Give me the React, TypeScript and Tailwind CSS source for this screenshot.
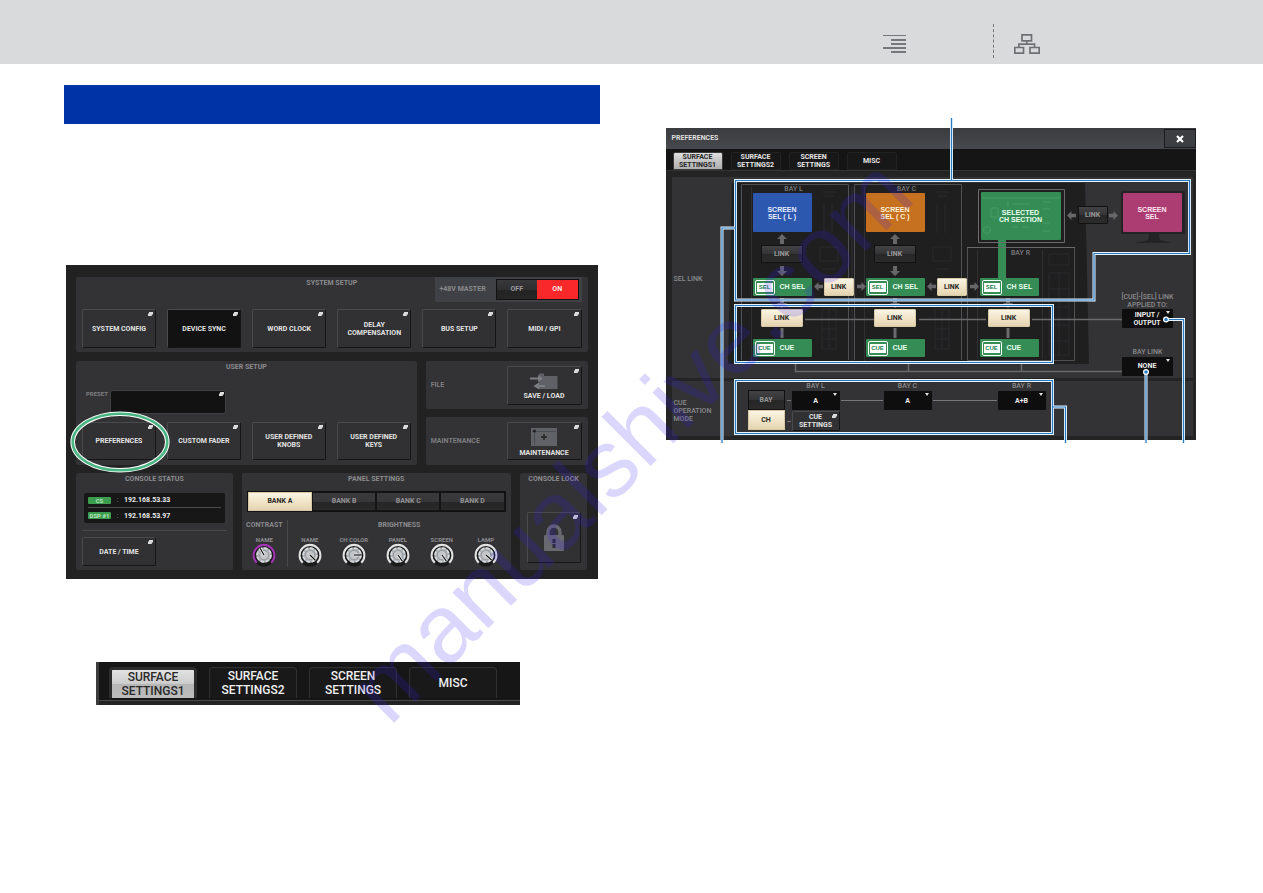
import React from "react";

function Popup({ className = "" }: { className?: string }) {
  return (
    <svg viewBox="0 0 5 4" aria-hidden="true" className={`pointer-events-none absolute right-[2px] top-[2px] h-1 w-[5px] ${className}`}>
      <path d="M1 0H5V2.6H3.8V4H0V1.6H1Z" fill="#dcdcdc" />
    </svg>
  );
}

function Caret() {
  return (
    <svg viewBox="0 0 4 3" aria-hidden="true" className="pointer-events-none absolute right-[3px] top-[2px] h-[3px] w-1">
      <path d="M0 0H4L2 3Z" fill="#e0e0e0" />
    </svg>
  );
}

function Key({ children, label, dark = false, className = "h-[39px]" }: { children: React.ReactNode; label?: string; dark?: boolean; className?: string }) {
  return (
    <button
      type="button"
      aria-label={label}
      className={`relative flex flex-col items-center justify-center rounded-[2px] border border-b-[#151515] border-r-[#151515] border-l-[#4a4a4c] border-t-[#4a4a4c] text-center text-[7px] font-bold leading-[8px] text-[#e2e2e2] ${dark ? "bg-[#121212]" : "bg-[#313133]"} ${className}`}
    >
      {children}
      <Popup />
    </button>
  );
}

function Panel({ children, className = "" }: { children: React.ReactNode; className?: string }) {
  return <section className={`rounded-[2px] bg-[#333335] ${className}`}>{children}</section>;
}

function Title({ children }: { children: React.ReactNode }) {
  return <h3 className="h-[13px] text-center text-[7px] font-bold leading-[13px] text-[#8b8b8d]">{children}</h3>;
}

function Knob({ id, label, angle, ring = "#e4e4e4" }: { id: string; label: string; angle: number; ring?: string }) {
  return (
    <div className="flex w-11 flex-col items-center">
      <label htmlFor={id} className="whitespace-nowrap text-[6px] font-bold leading-[7px] text-[#8b8b8d]">{label}</label>
      <div className="relative size-6">
        <svg viewBox="0 0 26 26" className="size-6" aria-hidden="true">
          <circle cx="13" cy="13" r="12.5" fill="#1b1b1c" />
          <path d="M5.2 21.5A11.3 11.3 0 1 1 20.8 21.5" fill="none" stroke={ring} strokeWidth="2.2" />
          <circle cx="13" cy="13" r="8.5" fill="#a9adb0" />
          <circle cx="13" cy="13" r="7.4" fill="none" stroke="#d9dcde" strokeWidth="1.8" strokeDasharray="3.8 2" />
          <circle cx="13" cy="13" r="5" fill="#c3c6c8" stroke="#8f9295" strokeWidth=".8" />
          <g transform={`rotate(${angle} 13 13)`}>
            <path d="M13 13H21.5" stroke="#f4f4f4" strokeWidth="2.8" />
            <path d="M13 13H21.5" stroke="#111" strokeWidth="1.3" />
          </g>
        </svg>
        <input id={id} type="range" className="absolute inset-0 size-6 cursor-pointer opacity-0" />
      </div>
    </div>
  );
}

const seg = "border border-[#141414] bg-[linear-gradient(#3a3a3d_0%,#37373a_50%,#262627_51%,#29292a_100%)]";
const cream = "border border-[#d8c9a6] bg-[linear-gradient(#faf4e4,#efe2c4_60%,#e3d3b0)] text-[#2b2924]";

function SetupFigure() {
  return (
    <figure className="relative bg-[#222223] px-[10px] pb-[9px] pt-3">
      <Panel className="px-[6px] pb-1">
        <div className="relative h-8">
          <Title>SYSTEM SETUP</Title>
          <div className="absolute right-0 top-0 flex h-[25px] w-[147px] items-center justify-between bg-[#404146] pl-[5px] pr-[3px]">
            <span className="text-[7px] font-bold text-[#8b8b8d]">+48V MASTER</span>
            <div className="grid h-[21px] w-[83px] grid-cols-2 border border-[#111] text-[7px] font-bold">
              <button type="button" aria-pressed="false" className="bg-[linear-gradient(#38383b_0%,#2f2f31_50%,#232324_51%,#262627_100%)] text-[#9a9a9c]">OFF</button>
              <button type="button" aria-pressed="true" className="bg-[#f9292b] text-[#ffe4e4]">ON</button>
            </div>
          </div>
        </div>
        <div className="grid grid-cols-6 gap-[11px]">
          <Key>SYSTEM CONFIG</Key>
          <Key dark>DEVICE SYNC</Key>
          <Key>WORD CLOCK</Key>
          <Key>DELAY<br />COMPENSATION</Key>
          <Key>BUS SETUP</Key>
          <Key>MIDI / GPI</Key>
        </div>
      </Panel>

      <div className="mt-[9px] grid grid-cols-[341fr_162fr] gap-[9px]">
        <Panel className="px-[6px] pb-[5px]">
          <Title>USER SETUP</Title>
          <div className="mb-2 ml-1 mt-4 flex h-6">
            <label htmlFor="preset" className="w-6 text-[6px] font-bold leading-[8px] text-[#7d7d7f]">PRESET</label>
            <div className="relative h-6 w-[116px]">
              <input id="preset" readOnly className="block h-6 w-full rounded-[2px] border border-[#3f3f41] bg-[#121212] text-[7px] text-white" />
              <Popup />
            </div>
          </div>
          <div className="relative grid grid-cols-4 gap-[11px]">
            <Key className="h-[38px]">PREFERENCES</Key>
            <Key className="h-[38px]">CUSTOM FADER</Key>
            <Key className="h-[38px]">USER DEFINED<br />KNOBS</Key>
            <Key className="h-[38px]">USER DEFINED<br />KEYS</Key>
            <svg viewBox="0 0 102 62" aria-hidden="true" className="pointer-events-none absolute -left-[13px] -top-[11px] h-[62px] w-[102px]">
              <ellipse cx="51" cy="31" rx="47.3" ry="28.3" fill="none" stroke="#fff" strokeWidth="4.6" />
              <ellipse cx="51" cy="31" rx="47.3" ry="28.3" fill="none" stroke="#4cb584" strokeWidth="2.6" />
            </svg>
          </div>
        </Panel>
        <div className="flex flex-col gap-2">
          <Panel className="flex h-12 items-center justify-between pl-[5px] pr-[6px]">
            <span className="text-[7px] font-bold text-[#7d7d7f]">FILE</span>
            <Key className="h-[39px] w-[75px]">
              <svg viewBox="0 0 28 17" aria-hidden="true" className="mb-[2px] mt-[3px] h-[17px] w-7">
                <path d="M9 5V.5H14V3H27.500V16H9Z" fill="#5f6166" />
                <path d="M0 4.500H8V2L13 5.500L8 9V6.500H0ZM15 12H9V9.500L3.500 13L9 16.500V14H15Z" fill="#7c7e83" />
              </svg>
              SAVE / LOAD
            </Key>
          </Panel>
          <Panel className="flex h-12 items-center justify-between pl-[5px] pr-[6px]">
            <span className="text-[7px] font-bold text-[#7d7d7f]">MAINTENANCE</span>
            <Key className="h-[38px] w-[75px]">
              <svg viewBox="0 0 26 18" aria-hidden="true" className="mb-[3px] mt-[3px] h-[18px] w-[26px]">
                <rect x="0" y="0" width="26" height="18" fill="#606267" />
                <path d="M1 3.500H25M3.500 2V17" stroke="#4b4d51" />
                <circle cx="3.500" cy="3" r="1.500" fill="#222" />
                <path d="M10 9H16M13 6V12" stroke="#222" strokeWidth="1.400" />
              </svg>
              MAINTENANCE
            </Key>
          </Panel>
        </div>
      </div>

      <div className="mt-2 grid grid-cols-[157fr_269fr_68fr] gap-[9px]">
        <Panel className="px-[6px] pb-1">
          <Title>CONSOLE STATUS</Title>
          <dl className="mx-[2px] mt-[7px] rounded-[2px] bg-[#171717] px-1 text-[7px] font-bold leading-[14px] text-[#ededed]">
            <div className="flex h-[15px] items-center border-b border-[#4a4a4a]">
              <dt className="h-[7px] w-[23px] rounded-[1px] bg-[#3c9d4e] text-center text-[6px] leading-[7px] text-[#b9e2c0]">CS</dt>
              <dd className="flex"><span className="w-[13px] text-center font-normal text-[#999]">:</span>192.168.53.33</dd>
            </div>
            <div className="flex h-[15px] items-center">
              <dt className="h-[7px] w-[23px] rounded-[1px] bg-[#3c9d4e] text-center text-[6px] leading-[7px] text-[#b9e2c0]">DSP #1</dt>
              <dd className="flex"><span className="w-[13px] text-center font-normal text-[#999]">:</span>192.168.53.97</dd>
            </div>
          </dl>
          <hr className="mb-[6px] mt-[7px] border-[#48484a]" />
          <Key className="h-[29px] w-[74px]">DATE / TIME</Key>
        </Panel>
        <Panel>
          <Title>PANEL SETTINGS</Title>
          <div className="mx-[5px] mt-[5px] grid h-[21px] grid-cols-4 border border-[#111] text-[7px] font-bold text-[#929294]">
            <button type="button" aria-pressed="true" className={cream}>BANK A</button>
            <button type="button" className={seg}>BANK B</button>
            <button type="button" className={seg}>BANK C</button>
            <button type="button" className={seg}>BANK D</button>
          </div>
          <div className="mt-2 flex text-center text-[7px] font-bold leading-[10px] text-[#8b8b8d]">
            <div className="w-[46px] border-r border-[#48484a]">
              <h4 className="mb-[6px] whitespace-nowrap">CONTRAST</h4>
              <div className="flex justify-center"><Knob id="contrast-name" label="NAME" angle={-120} ring="#a436b4" /></div>
            </div>
            <div className="flex-1">
              <h4 className="mb-[6px]">BRIGHTNESS</h4>
              <div className="flex">
                <Knob id="b-name" label="NAME" angle={45} />
                <Knob id="b-ch" label="CH COLOR" angle={0} />
                <Knob id="b-panel" label="PANEL" angle={55} />
                <Knob id="b-screen" label="SCREEN" angle={55} />
                <Knob id="b-lamp" label="LAMP" angle={42} />
              </div>
            </div>
          </div>
        </Panel>
        <Panel className="flex flex-col items-center">
          <Title>CONSOLE LOCK</Title>
          <Key label="Lock" className="mt-[26px] h-[51px] w-[54px]">
            <svg viewBox="0 0 22 28" aria-hidden="true" className="h-7 w-[22px]">
              <path d="M5 13V8A6 6 0 0 1 17 8V13" fill="none" stroke="#68696e" strokeWidth="3.400" />
              <rect x="1" y="11" width="20" height="16" rx="1" fill="#68696e" />
              <path d="M11 15V24" stroke="#2c2c2e" strokeWidth="3" strokeDasharray="4 1" />
            </svg>
          </Key>
        </Panel>
      </div>
    </figure>
  );
}

const tabs = [["SURFACE", "SETTINGS1"], ["SURFACE", "SETTINGS2"], ["SCREEN", "SETTINGS"], ["MISC"]];

function TabStrip() {
  return (
    <div className="border-l-[3px] border-l-[#3c3c3c] bg-[#232323] pb-1">
      <div role="tablist" aria-label="Preferences pages" className="flex h-[39px] gap-3 border-b border-b-[#4a4a4a] bg-[#161616] pl-[10px] pt-[5px]">
        {tabs.map((t, i) => (
          <button
            key={t.join(" ")}
            type="button"
            role="tab"
            aria-selected={i === 0}
            className={`h-[31px] w-[88px] rounded-t-[4px] border border-b-0 text-[12px] font-medium leading-[14px] ${i === 0 ? "border-[3px] border-[#2c2c2c] bg-[linear-gradient(#e2e2e2,#cdcdcd_48%,#b5b5b5_50%,#bdbdbd)] text-[#2a2a2a]" : "border-[#303030] bg-[#191919] text-[#f0f0f0]"}`}
          >
            {t.map((l) => <span key={l} className="block">{l}</span>)}
          </button>
        ))}
      </div>
    </div>
  );
}

function Link({ className, on = false }: { className: string; on?: boolean }) {
  return (
    <button
      type="button"
      aria-pressed={on}
      className={`absolute h-[18px] rounded-[1px] text-[7px] font-bold leading-[16px] ${on ? cream : "border border-[#111] bg-[linear-gradient(#434346,#343436_50%,#272728_51%,#2b2b2c)] text-[#98989a]"} ${className}`}
    >
      LINK
    </button>
  );
}

function Green({ tag, text, className }: { tag: string; text: string; className: string }) {
  return (
    <div className={`absolute flex h-[18px] w-[59px] items-center gap-[5px] rounded-[1px] bg-[#358d55] pl-[2px] font-['Liberation_Sans',sans-serif] text-[7px] font-bold text-[#e8fff0] ${className}`}>
      <span className="flex h-[15px] w-5 items-center justify-center rounded-[2px] border border-white bg-[#358d55]">
        <span className="w-4 bg-white text-center text-[6px] leading-[9px] text-[#20804a]">{tag}</span>
      </span>
      {text}
    </div>
  );
}

function Pick({ label, options, className = "" }: { label: string; options: string[]; className?: string }) {
  return (
    <div className={`relative h-[19px] ${className}`}>
      <select aria-label={label} className="block h-full w-full appearance-none rounded-[1px] bg-[#0e0e0f] text-center text-[7px] font-bold text-[#ededed]">
        {options.map((o) => <option key={o}>{o}</option>)}
      </select>
      <Caret />
    </div>
  );
}

const up = "M0 0L5 5H2V10H-2V5H-5Z";

function Diagram() {
  return (
    <div className="relative h-[201px] bg-[#333335]">
      <svg viewBox="0 0 521 201" className="absolute left-0 top-0 h-[201px] w-[521px]" aria-hidden="true">
        <path d="M60 6H413L417 187H56Z" fill="#1f1f20" />
        <g fill="none" stroke="#505052">
          <path d="M69.500 183V7.500H176.500V183M182.500 183V7.500H289.500V183" />
          <path d="M295.500 183.500V70.500H402.500V183.500Z" />
        </g>
        <g fill="none" stroke="#303032">
          <path d="M79.500 10V185M180 10V185M192.500 10V185M305.500 73V182M370.500 73V182" />
        </g>
        <g fill="none" stroke="#2b2b2c">
          {[150, 263].map((x) => (
            <path key={x} d={`M${x} 15H${x + 14}M${x + 3} 19H${x + 12}M${x + 2} 27V56M${x + 10} 27V56M${x - 2} 70H${x + 16}V84H${x - 2}ZM${x} 92H${x + 14}M${x} 132H${x + 14}V172H${x}ZM${x + 7} 132V172M${x} 142H${x + 14}M${x} 152H${x + 14}M${x} 162H${x + 14}`} />
          ))}
          <path d="M377 77H397V88H377ZM377 96H397V178H377ZM387 96V178M377 112H397M377 130H397M377 148H397M377 164H397" />
        </g>
        <g stroke="#6a6a6c" fill="none">
          <path d="M133 142.500H202M247 142.500H314M360 142.500H450" strokeWidth="1.500" />
          <path d="M123.500 187V194.500H450M236.500 187V194M349.500 187V194" strokeWidth="1.500" />
          <path d="M110 151V161M223 151V161M336 151V161" strokeWidth="3" />
        </g>
        <g fill="#67676a">
          <path d={up} transform="translate(110 57)" />
          <path d={up} transform="translate(223 57)" />
          <path d={up} transform="translate(110 99) rotate(180)" />
          <path d={up} transform="translate(223 99) rotate(180)" />
          <path d={up} transform="translate(110 131) rotate(180)" />
          <path d={up} transform="translate(223 131) rotate(180)" />
          <path d={up} transform="translate(336 131) rotate(180)" />
          <path d={up} transform="translate(142 109.500) rotate(-90) scale(.9)" />
          <path d={up} transform="translate(194 109.500) rotate(90) scale(.9)" />
          <path d={up} transform="translate(255 109.500) rotate(-90) scale(.9)" />
          <path d={up} transform="translate(307 109.500) rotate(90) scale(.9)" />
          <path d={up} transform="translate(395 38.500) rotate(-90) scale(.9)" />
          <path d={up} transform="translate(446 38.500) rotate(90) scale(.9)" />
        </g>
        <rect x="326" y="62" width="8" height="40" fill="#358d55" />
        <path d="M295 70.500H403M306.500 12.500H392.500V65.500H306.500Z" fill="none" stroke="#6a6a6c" />
        <rect x="309" y="15" width="80" height="48" rx="1" fill="#358d55" />
        <g stroke="#4f9f6c" fill="none" strokeWidth=".8">
          <path d="M310 21H388M319 31H326V40H319ZM340 27H358M340 50H346M350 50H357M371 25H378M371 32H378M371 46H378M371 54H378M336 24V29" />
          <circle cx="315" cy="53" r="3.500" />
        </g>
        <rect x="449" y="14" width="64" height="43" rx="1" fill="#232325" />
        <path d="M477 57H487L488 63L500 66H464L476 63Z" fill="#232325" />
      </svg>
      <span className="absolute left-[2px] top-[97px] text-[7px] font-medium leading-[10px] text-[#8b8b8d]">SEL LINK</span>
      <span className="absolute left-[108px] top-2 w-7 text-center text-[7px] font-medium leading-[8px] text-[#7b7b7e]">BAY L</span>
      <span className="absolute left-[221px] top-2 w-7 text-center text-[7px] font-medium leading-[8px] text-[#7b7b7e]">BAY C</span>
      <span className="absolute left-[335px] top-[72px] w-7 text-center text-[7px] font-medium leading-[8px] text-[#7b7b7e]">BAY R</span>
      <div className="absolute left-[81px] top-4 flex h-[39px] w-[59px] items-center justify-center rounded-[1px] bg-[#2d58b0] text-center font-['Liberation_Sans',sans-serif] text-[7px] font-bold leading-[7px] text-[#e6ecff]">SCREEN<br />SEL ( L )</div>
      <div className="absolute left-[194px] top-4 flex h-[39px] w-[59px] items-center justify-center rounded-[1px] bg-[#c6711f] text-center font-['Liberation_Sans',sans-serif] text-[7px] font-bold leading-[7px] text-[#fff0dc]">SCREEN<br />SEL ( C )</div>
      <div className="absolute left-[309px] top-[15px] flex h-12 w-20 items-center justify-center text-center font-['Liberation_Sans',sans-serif] text-[7px] font-bold leading-[7px] text-[#e8fff0]">SELECTED<br />CH SECTION</div>
      <div className="absolute left-[451px] top-4 flex h-[39px] w-[59px] items-center justify-center rounded-[1px] bg-[#ac3d72] text-center font-['Liberation_Sans',sans-serif] text-[7px] font-bold leading-[7px] text-[#ffe6f2]">SCREEN<br />SEL</div>
      <Link className="left-[89px] top-[68px] w-[42px]" />
      <Link className="left-[202px] top-[68px] w-[42px]" />
      <Link className="left-[406px] top-[29px] w-[30px]" />
      <Green tag="SEL" text="CH SEL" className="left-[81px] top-[101px]" />
      <Green tag="SEL" text="CH SEL" className="left-[194px] top-[101px]" />
      <Green tag="SEL" text="CH SEL" className="left-[308px] top-[101px]" />
      <Link on className="left-[152px] top-[101px] w-[30px]" />
      <Link on className="left-[265px] top-[101px] w-[30px]" />
      <Link on className="left-[89px] top-[132px] w-[42px]" />
      <Link on className="left-[202px] top-[132px] w-[42px]" />
      <Link on className="left-[316px] top-[132px] w-[42px]" />
      <Green tag="CUE" text="CUE" className="left-[81px] top-[162px]" />
      <Green tag="CUE" text="CUE" className="left-[194px] top-[162px]" />
      <Green tag="CUE" text="CUE" className="left-[308px] top-[162px]" />
      <div className="absolute left-[440px] top-[116px] w-[72px] text-center text-[7px] font-medium leading-[8px] text-[#8b8b8d]">[CUE]-[SEL] LINK<br />APPLIED TO:</div>
      <button type="button" aria-haspopup="listbox" className="absolute left-[450px] top-[132px] h-[19px] w-[51px] rounded-[1px] bg-[#0e0e0f] text-[7px] font-bold leading-[8px] text-[#ededed]">INPUT /<br />OUTPUT<Caret /></button>
      <div className="absolute left-[440px] top-[171px] w-[72px] text-center text-[7px] font-medium leading-[8px] text-[#8b8b8d]">BAY LINK</div>
      <div className="absolute left-[450px] top-[180px] w-[51px]"><Pick label="Bay link" options={["NONE", "L+C", "ALL"]} /></div>
    </div>
  );
}

function Callouts() {
  const d = "M69.500 52.500H523.500V125.500H428V172H69.500ZM285.500 -10V52M69.500 177.500H386.500V234.500H69.500ZM69 100H56V315M69.500 252.500H386.500V305.500H69.500ZM387 279H399.500V315M480 246V315M502 191.500H517.500V315";
  return (
    <svg viewBox="-1 -11 532 328" className="pointer-events-none absolute -left-px -top-[11px] h-[328px] w-[532px]" aria-hidden="true">
      <path d={d} fill="none" stroke="#e8f4fc" strokeWidth="3" />
      <path d={d} fill="none" stroke="#2a7ac2" strokeWidth="1.200" />
      <circle cx="480" cy="244" r="2.400" fill="#2b7cc4" stroke="#fff" strokeWidth="1.200" />
      <circle cx="500" cy="191.500" r="2.400" fill="#2b7cc4" stroke="#fff" strokeWidth="1.200" />
    </svg>
  );
}

function PreferencesFigure() {
  return (
    <figure className="relative bg-[#242425]">
      <header className="flex h-[21px] items-center justify-between bg-[linear-gradient(#3b3c40,#48494e)] pl-[6px]">
        <h2 className="text-[7px] font-bold text-[#dedede]">PREFERENCES</h2>
        <button type="button" aria-label="Close" className="flex h-[19px] w-8 items-center justify-center border border-[#1b1b1c] bg-[#3d3e42]">
          <svg viewBox="0 0 8 8" className="size-2"><path d="M1 1L7 7M7 1L1 7" stroke="#fff" strokeWidth="2.200" /></svg>
        </button>
      </header>
      <div role="tablist" aria-label="Preferences" className="flex h-[22px] gap-2 border-b border-[#333] bg-[#151515] pl-[7px] pt-[3px]">
        {tabs.map((t, i) => (
          <button
            key={t.join(" ")}
            type="button"
            role="tab"
            aria-selected={i === 0}
            className={`h-[18px] w-[50px] rounded-t-[2px] border text-[7px] font-bold leading-[8px] ${i === 0 ? "border-[#3a3a3a] bg-[linear-gradient(#e0e0e0,#c4c4c4_50%,#b0b0b0)] text-[#262626]" : "border-[#222] bg-[#181818] text-[#e6e6e6]"}`}
          >
            {t.map((l) => <span key={l} className="block">{l}</span>)}
          </button>
        ))}
      </div>
      <div className="flex flex-col gap-[3px] pb-1 pl-[6px] pr-[3px] pt-[6px]">
        <Diagram />
        <div className="flex h-[55px] bg-[#333335] pl-[2px] text-[7px] font-medium text-[#8b8b8d]">
          <h3 className="flex w-[74px] items-center pt-1 leading-[8px]">CUE<br />OPERATION<br />MODE</h3>
          <div className="flex flex-col pt-[9px]">
            <button type="button" aria-pressed="false" className="h-5 w-[37px] border border-[#111] bg-[linear-gradient(#434346,#343436_50%,#272728_51%,#2b2b2c)] font-bold text-[#98989a]">BAY</button>
            <button type="button" aria-pressed="true" className={`h-5 w-[37px] font-bold ${cream}`}>CH</button>
          </div>
          <div className="grid grid-cols-[5px_48px_44px_48px_66px_48px] grid-rows-[8px_19px_20px] items-center gap-y-px pl-[2px] pt-[1px] text-center leading-[8px]">
            <i /><span>BAY L</span><i /><span>BAY C</span><i /><span>BAY R</span>
            <i className="mr-px h-px bg-[#77777a]" />
            <Pick label="Bay L" options={["A", "B", "A+B"]} />
            <i className="mx-px h-px bg-[#77777a]" />
            <Pick label="Bay C" options={["A", "B", "A+B"]} />
            <i className="mx-px h-px bg-[#77777a]" />
            <Pick label="Bay R" options={["A+B", "A", "B"]} />
            <i className="mr-px h-px bg-[#77777a]" />
            <Key className="h-5">CUE<br />SETTINGS</Key>
          </div>
        </div>
      </div>
      <Callouts />
    </figure>
  );
}

export default function App() {
  return (
    <div className="relative min-h-screen overflow-hidden bg-white font-['Roboto',sans-serif]">
      <header className="flex h-16 justify-end bg-[#d9dadc] pr-[223px] pt-6">
        <nav className="flex">
          <a href="#contents" aria-label="Contents" className="mr-[87px] mt-[10px] block h-5">
            <svg viewBox="0 0 23 20" className="h-5 w-[23px]">
              <path d="M0 1H23V2H0ZM8 5H23V7H8ZM8 9H23V11H8ZM0 13H23V15H0ZM8 17H23V19H8Z" fill="#76777a" />
            </svg>
          </a>
          <span className="h-[34px] border-l border-dashed border-[#76777a]" />
          <a href="#sitemap" aria-label="Screen map" className="ml-5 mt-[10px] block h-5">
            <svg viewBox="0 0 26 20" className="h-5 w-[26px]" fill="none" stroke="#6f7073">
              <path d="M8 .8H17.500V6.800H8ZM.8 13.500H9.500V19.200H.8ZM16 13.500H25.200V19.200H16Z" strokeWidth="1.700" />
              <path d="M12.800 7V10M4.900 13V10.200H20.500V13" strokeWidth="1.700" />
            </svg>
          </a>
        </nav>
      </header>
      <main className="grid grid-cols-2 gap-[64px] px-16 pt-[21px]">
        <div>
          <div className="h-[39px] bg-[#0033a5]" />
          <div className="mt-[141px] px-[2px]"><SetupFigure /></div>
          <div className="ml-8 mr-20 mt-[83px]"><TabStrip /></div>
        </div>
        <div className="pl-[2px] pr-[3px] pt-[43px]"><PreferencesFigure /></div>
      </main>
      <div aria-hidden="true" className="pointer-events-none absolute left-[400px] top-[642px] origin-bottom-left -rotate-45 whitespace-nowrap font-['Liberation_Sans',sans-serif] text-[96px] leading-[96px] text-[#3a1cf0]/18">manualshive.com</div>
    </div>
  );
}
